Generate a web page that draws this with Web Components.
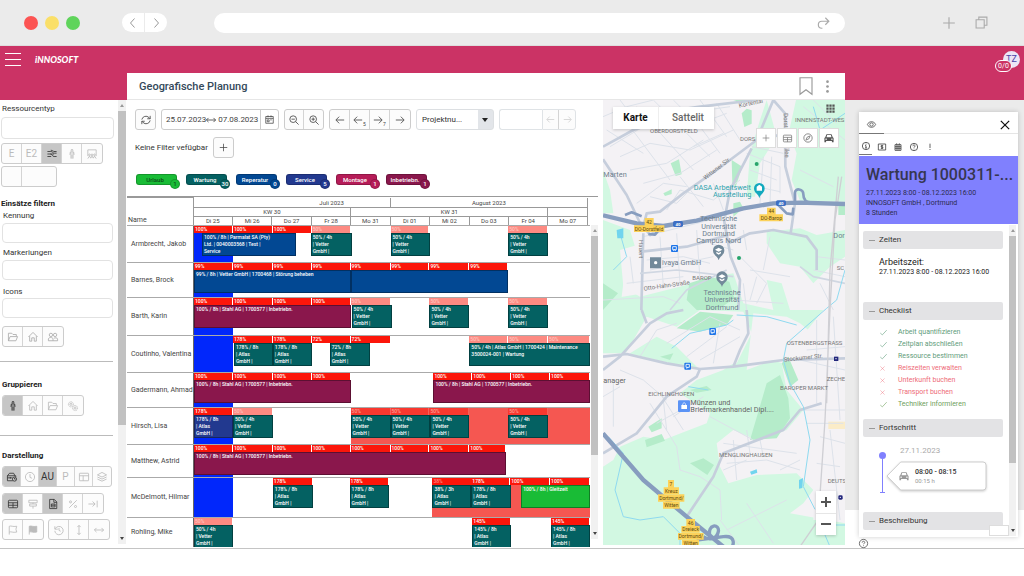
<!DOCTYPE html>
<html lang="de">
<head>
<meta charset="utf-8">
<title>Geografische Planung</title>
<style>
html{background:#fff}
body{margin:0;font:8px/10px Roboto,"Liberation Sans",sans-serif;color:#333}
</style>
</head>
<body>
<browser-bar></browser-bar>
<planner-app></planner-app>
<script>
const define = (name, html, setup) => {
  const tpl = document.createElement('template');
  tpl.innerHTML = '<style>*{box-sizing:border-box}button,input,select{font:inherit;color:inherit;margin:0}button.on{color:#333}h1,h2,h3,p,ul,dl,dd{margin:0;padding:0}</style>' + html;
  customElements.define(name, class extends HTMLElement {
    constructor() {
      super();
      this.attachShadow({mode: 'open'}).append(tpl.content.cloneNode(true));
    }
    connectedCallback() { if (setup) setup(this, this.shadowRoot); }
  });
};

/* ---------- icons, 24 x 24 grid ---------- */
const ICONS = {
  left: '<path d="M15 3l-8 9 8 9"/>',
  right: '<path d="M9 3l8 9-8 9"/>',
  share: '<path d="M21 9h-11a6 6 0 0 0 0 12h1M16 3l6 6-6 6"/>',
  plus: '<path d="M12 2v20M2 12h20"/>',
  minus: '<path d="M2 12h20"/>',
  tabs: '<path d="M2 7h15v15H2zM7 7V2h15v15h-5"/>',
  close: '<path d="M2 2l20 20M22 2L2 22"/>',
  refresh: '<path d="M2 11a10 10 0 0 1 17-5l3 3M22 2v7h-7M22 13a10 10 0 0 1-17 5l-3-3M2 22v-7h7"/>',
  range: '<path d="M1 12h22M6 7l-5 5 5 5M18 7l5 5-5 5"/>',
  calendar: '<path d="M2 4h20v18H2zM2 9h20M8 1v5M16 1v5" /><path d="M6 13h5v5H6z"/><path d="M14 13h4"/>',
  zoomout: '<circle cx="10" cy="10" r="8"/><path d="M16 16l7 7M6 10h8"/>',
  zoomin: '<circle cx="10" cy="10" r="8"/><path d="M16 16l7 7M6 10h8M10 6v8"/>',
  aleft: '<path d="M22 12H3M10 4l-8 8 8 8"/>',
  aright: '<path d="M2 12h19M14 4l8 8-8 8"/>',
  toend: '<path d="M1 12h16M11 6l6 6-6 6M22 4v16"/>',
  updown: '<path d="M12 1v22M8 5l4-4 4 4M8 19l4 4 4-4"/>',
  person: '<circle cx="12" cy="3" r="2.200"/><path d="M7 14l1-7h8l1 7M9.500 8v15M14.500 8v15M12 14v9"/>',
  group: '<path d="M2 17V2h20v15"/><circle cx="6" cy="14" r="2"/><circle cx="12" cy="14" r="2"/><circle cx="18" cy="14" r="2"/><path d="M2 23l4-6 3 5 3-5 3 5 3-5 4 6"/>',
  swap: '<path d="M1 6h8c5 0 4 4 9 4h5M23 6h-6M1 12h7c5 0 4 6 9 6h6M1 18h9M9 3c5 0 5 3 9 3M8 12h9"/>',
  folder: '<path d="M1 21V3h8l3 3h8v4M1 21L5 11h18l-4 10z"/>',
  home: '<path d="M1 12L12 1l11 11M4 10v12h5v-8h6v8h5V10"/>',
  people: '<circle cx="7" cy="7" r="4"/><circle cx="17" cy="7" r="4"/><path d="M1 21v-4c0-5 11-5 11 0v4zM12 21h11v-4c0-3-6-4-9-2"/>',
  gears: '<circle cx="7" cy="8" r="6" stroke-dasharray="3 1"/><circle cx="7" cy="8" r="2.500"/><circle cx="17" cy="17" r="6" stroke-dasharray="3 1"/><circle cx="17" cy="17" r="2.500"/>',
  clock: '<circle cx="12" cy="12" r="11"/><path d="M12 5v8l5 2"/>',
  history: '<path d="M2 3v7h7M3 9a10 10 0 1 1-1 5M12 7v6l4 2"/>',
  caseclock: '<path d="M14 21H1V9h20v3M1 9l5-6h10l3 6M1 14h12M8 12v4" /><circle cx="18" cy="17" r="5"/><path d="M18 14v3h3"/>',
  table: '<rect x="1" y="3" width="22" height="18" rx="2"/><path d="M1 9h22M1 15h22M12 9v12"/>',
  layout: '<rect x="1" y="3" width="22" height="18" rx="1"/><path d="M1 9h22M10 9v12"/>',
  layers: '<path d="M12 1l11 6-11 5L1 7zM1 12l11 5 11-5M1 17l11 5 11-5"/>',
  sign: '<path d="M2 3h20v6H2zM4 12h16v5H4zM12 9v3M12 17v6"/>',
  doc: '<path d="M4 1h11l6 6v16H4zM14 1v7h7M8 12h9v7H8zM8 15h9"/>',
  percent: '<path d="M21 3L3 21"/><circle cx="6" cy="7" r="2.500"/><circle cx="18" cy="18" r="2.500"/>',
  flag: '<path d="M3 23V3c5-2 8 2 18 0l-2 7 2 7c-10 2-13-2-18 0"/>',
  flagfull: '<path fill="currentColor" d="M3 23V3c5-2 8 2 18 0v14c-10 2-13-2-18 0"/>',
  bookmark: '<path d="M4 1h16v22l-8-6-8 6z"/>',
  dots: '<g fill="currentColor" stroke="none"><circle cx="12" cy="3" r="2.500"/><circle cx="12" cy="12" r="2.500"/><circle cx="12" cy="21" r="2.500"/></g>',
  grid: '<path fill="currentColor" stroke="none" d="M1 1h6v6H1zM9 1h6v6H9zM17 1h6v6h-6zM1 9h6v6H1zM9 9h6v6H9zM17 9h6v6h-6zM1 17h6v6H1zM9 17h6v6H9zM17 17h6v6h-6z"/>',
  compass: '<circle cx="12" cy="12" r="10"/><path d="M17 7l-3 7-7 3 3-7z"/>',
  car: '<path fill="currentColor" stroke="none" fill-rule="evenodd" d="M6 3h12l3 7 2 2v10h-4v-3H5v3H1V12l2-2zM7.500 5L6 10h12l-1.500-5zM5 13a1.700 1.700 0 1 0 .1 0M19 13a1.700 1.700 0 1 0 .1 0"/>',
  eye: '<path d="M1 12C5 2 19 2 23 12 19 22 5 22 1 12z"/><circle cx="12" cy="12" r="4.500"/>',
  info: '<circle cx="12" cy="12" r="11"/><path d="M12 5v3M9 11h3v7M9 18h6"/>',
  money: '<path d="M1 3h22v18H1z"/><path d="M15.500 8h-6v4h5v4H8.500M12 6v12"/>',
  cal2: '<path d="M3 5h18v17H3zM3 11h18M3 16h18M9 5v17M15 5v17M8 1v4M16 1v4"/>',
  help: '<circle cx="12" cy="12" r="11"/><path d="M8.500 9.500c0-5 7-4 7-.5 0 2.500-3.500 2.500-3.500 5M12 17v2"/>',
  bang: '<path d="M12 2v13M12 18v3"/>',
  check: '<path d="M1 14l7 6L23 4"/>',
  cross: '<path d="M2 2l20 20M22 2L2 22"/>'
};
define('ui-icon', `<style>:host{display:inline-block;width:var(--size,10px);height:var(--size,10px);flex:none}
svg{display:block;width:100%;height:100%;fill:none;stroke:currentColor;stroke-width:var(--stroke,2);overflow:visible}</style>
<svg viewBox="0 0 24 24" aria-hidden="true"></svg>`,
  (el, r) => { r.querySelector('svg').innerHTML = ICONS[el.getAttribute('name')] || ''; });

define('button-group', `<style>:host{display:inline-flex;height:21px;border:1px solid #ccc;border-radius:3px;background:#fcfcfc;overflow:hidden;color:#444;flex:none}
::slotted(button){appearance:none;border:0;border-right:1px solid #d4d4d4;background:none;padding:0;margin:0;width:var(--cell,20px);display:flex;align-items:center;justify-content:center;color:inherit;font:inherit}
::slotted(button:last-child){border-right:0}
::slotted(button.on){background:#c6c6c6}
::slotted(button.wide){width:34px}</style><slot></slot>`);

define('scroll-rail', `<style>:host{display:flex;flex-direction:column;align-items:center;background:#f1f1f1;width:7px}
i{border:2px solid transparent;height:0;margin:4px 0}.u{border-bottom:3px solid #999;border-top:0}.d{border-top:3px solid #444;border-bottom:0}
b{background:#c1c1c1;width:100%;flex:var(--thumb,70) 0 0}s{flex:var(--rest,30) 0 0}</style><i class="u"></i><b></b><s></s><i class="d"></i>`);

/* ---------- browser frame ---------- */
define('browser-bar', `<style>
:host{display:flex;align-items:center;height:46px;box-sizing:border-box;background:#ebebeb;border-bottom:1px solid #dedede;padding:0 36px 0 24px;color:#aaa}
.dots{display:flex;gap:7px}.dots i{width:14px;height:14px;border-radius:50%}
nav{display:flex;gap:1px;margin:0 47px 0 42px}
nav button{border:0;background:#fff;width:22px;height:19px;padding:0;display:flex;align-items:center;justify-content:center;color:#999}
nav button:first-child{border-radius:10px 0 0 10px}nav button:last-child{border-radius:0 10px 10px 0}
.url{flex:1;display:flex;align-items:center;background:#fff;height:20px;border-radius:10px;padding:0 15px}
.url input{flex:1;min-width:0;border:0;background:none;outline:0}
.plain{border:0;background:none;padding:0;display:flex;color:#aaa}
.end{display:flex;align-items:center;gap:19px;margin-left:97px}
</style>
<div class="dots"><i style="background:#fc5453"></i><i style="background:#fadf68"></i><i style="background:#5fd45b"></i></div>
<nav aria-label="Verlauf"><button aria-label="Zurück"><ui-icon name="left" style="--size:12px"></ui-icon></button><button aria-label="Vor"><ui-icon name="right" style="--size:12px"></ui-icon></button></nav>
<div class="url"><input aria-label="Adresse"><button class="plain" aria-label="Teilen"><ui-icon name="share" style="--size:14px"></ui-icon></button></div>
<div class="end"><button class="plain" aria-label="Neuer Tab"><ui-icon name="plus" style="--size:14px"></ui-icon></button><button class="plain" aria-label="Tabs"><ui-icon name="tabs" style="--size:13px"></ui-icon></button></div>`);

/* ---------- application shell ---------- */
define('planner-app', `<style>
:host{display:block;background:linear-gradient(#cb3365 54px,#ebebeb 54px);border-bottom:1px solid #c4c4c4}
header{display:flex;align-items:center;height:27px;padding:0 4px 0 5px;color:#fff}
.menu{border:0;background:none;padding:0;width:16px;height:13px;display:flex;flex-direction:column;justify-content:space-between}
.menu i{height:1px;width:16px;background:#fff}
.logo{font:italic 900 9px/12px Lato,sans-serif;margin-left:14px;flex:1;color:#fff;text-decoration:none}
.user{position:relative;width:17px;height:17px;border-radius:50%;background:#ece6f6;color:#4a43a8;font-size:9px;line-height:17px;text-align:center;border:0;padding:0}
.user span{position:absolute;left:-8px;top:9px;width:17px;height:12px;border:1px solid #fff;border-radius:7px;background:#cb3365;color:#fff;font-size:7px;line-height:10px}
main{display:grid;grid-template-columns:127px minmax(0,1fr) 179px}
side-panel,detail-column{margin-top:27px}
</style>
<header><button class="menu" aria-label="Menü"><i></i><i></i><i></i></button><a class="logo" href="#">iNNOSOFT</a><button class="user" aria-label="Benutzer TZ">TZ<span>0/0</span></button></header>
<main><side-panel></side-panel><planning-board></planning-board><detail-column></detail-column></main>`);

/* ---------- left panel ---------- */
const ic = (n, label, on) => `<button aria-label="${label}"${on ? ' class="on"' : ''}><ui-icon name="${n}"></ui-icon></button>`;
define('side-panel', `<style>
:host{display:flex;background:#fff;padding-bottom:4px}
.body{flex:1;min-width:0;padding-top:4px;color:#333}
scroll-rail{width:8px;--thumb:313;--rest:107;margin-right:1px}
section{padding:0 5px 0 2px}
section+section{border-top:1px solid #bbb;margin-right:5px;padding-right:0}
label{display:block;padding-left:1px}label.f{margin-top:8px}
input{display:block;width:100%;height:20px;border:1px solid #e2e2e2;border-radius:4px;background:#fff;margin-top:2px}
h2{font-size:8px;line-height:10px;font-weight:700;color:#222}
button-group{color:#aaa;vertical-align:top}
.pale button-group{color:#bbb}
.row{display:flex;gap:4px;margin-top:6px}
</style>
<div class="body">
<section class="pale" style="padding-left:1px;padding-right:4px"><label for="rt">Ressourcentyp</label><input id="rt" style="height:22px;margin-top:3px">
<div class="row" style="margin-top:4px;font-size:10px"><button-group><button>E</button><button>E2</button>${ic('swap','Wechsel',1)}${ic('person','Person')}${ic('group','Gruppe')}</button-group></div>
<div class="row" style="margin-top:2px"><button-group><button aria-label="leer"></button><button aria-label="leer" class="wide"></button></button-group></div>
<h2 style="margin-top:12px">Einsätze filtern</h2>
</section>
<section style="border:0;margin-right:0;padding-right:5px;padding-bottom:14px">
<label for="k" style="margin-top:2px">Kennung</label><input id="k">
<label class="f" style="margin-top:5px" for="m">Markeriungen</label><input id="m">
<label class="f" style="margin-top:7px" for="i">Icons</label><input id="i" style="margin-top:1px">
<div class="row" style="margin-top:8px"><button-group>${ic('folder','Ordner')}${ic('home','Start')}${ic('people','Personen')}</button-group></div>
</section>
<section class="pale" style="padding-top:18px;padding-bottom:19px"><h2>Gruppieren</h2>
<div class="row" style="margin-top:5px"><button-group>${ic('person','Person',1)}${ic('home','Start')}${ic('folder','Ordner')}${ic('gears','Technik')}</button-group></div></section>
<section class="pale" style="padding-top:15px"><h2>Darstellung</h2>
<div class="row" style="margin-top:5px;font-size:10px;--cell:18px"><button-group>${ic('caseclock','Einsatzzeit',1)}${ic('clock','Uhr')}<button class="on">AU</button><button>P</button>${ic('layout','Layout')}${ic('layers','Ebenen')}</button-group></div>
<div class="row"><button-group>${ic('table','Tabelle',1)}${ic('sign','Schild')}${ic('doc','Dokument',1)}${ic('percent','Prozent')}${ic('toend','Ende')}</button-group></div>
<div class="row" style="margin-top:5px"><button-group>${ic('flag','Flagge')}${ic('flagfull','Flagge voll')}</button-group><button-group>${ic('history','Verlauf')}${ic('updown','Höhe')}${ic('range','Breite')}</button-group></div></section>
</div><scroll-rail></scroll-rail>`);

/* ---------- centre ---------- */
define('legend-chip', `<style>
:host{display:block;position:relative;width:41px;height:11px;border-radius:3px;background:var(--c);border:1px solid #0003;box-sizing:border-box;color:var(--t,#fff);font-size:6px;line-height:9px;font-weight:500;text-align:center;padding-right:3px}
b{position:absolute;right:-4px;top:4px;width:10px;height:10px;border-radius:50%;background:var(--c);border:1px solid #0003;font-weight:500;line-height:8px}
</style><slot></slot><b></b>`, (el, r) => { r.querySelector('b').textContent = el.getAttribute('count'); });

define('planning-board', `<style>
:host{display:block;background:#fff;min-width:0}
.head{display:flex;align-items:center;height:27px;padding:0 11px 0 12px;border-bottom:1px solid #e6e6e6;color:#999}
h1{font-size:11px;line-height:14px;font-weight:500;color:#34495a;flex:1;padding-top:2px}
.plain{border:0;background:none;padding:0;display:flex;color:inherit}
.cols{display:grid;grid-template-columns:minmax(0,1fr) 242px}
.left{padding-right:5px;min-width:0}
.tools{display:flex;padding:9px 0 0 8px;gap:5px;color:#444}
.date{display:flex;height:21px;border:1px solid #ccc;border-radius:3px;align-items:center;padding-left:4px}
.date span{display:flex;align-items:center;width:94px}.date button{border:0;border-left:1px solid #ccc;background:none;width:18px;height:19px;padding:0;display:flex;align-items:center;justify-content:center}
.sel{display:flex;position:relative;width:78px;height:21px}
select{appearance:none;width:100%;border:1px solid #dcdfe2;border-radius:3px;padding:0 0 0 5px;background:linear-gradient(90deg,transparent 61px,#e2e5e9 61px);color:#333}
.sel i{position:absolute;right:6px;top:9px;border:3px solid transparent;border-top:4px solid #222;border-bottom:0}
.find{display:flex}.find input{width:43px;border:1px solid #dfe3e6;border-right:0;border-radius:3px 0 0 3px;background:#fff}
.find button-group{color:#ccc;border-color:#dfe3e6;border-radius:0 3px 3px 0;--cell:16px;--size:9px}
.slim{--cell:19px}
sub{font-size:5px;line-height:5px;align-self:flex-end;margin-bottom:2px}
.filter{display:flex;align-items:center;gap:5px;padding:7px 8px 0}
.legend{display:flex;gap:9px;padding:16px 9px 11px}
</style>
<div class="head"><h1>Geografische Planung</h1>
<button class="plain" aria-label="Merken" style="margin-right:6px"><ui-icon name="bookmark" style="--size:18px;--stroke:1.500"></ui-icon></button><button class="plain" aria-label="Mehr"><ui-icon name="dots" style="--size:13px"></ui-icon></button></div>
<div class="cols"><div class="left">
<div class="tools">
<button-group class="slim">${ic('refresh','Aktualisieren')}</button-group>
<div class="date"><span>25.07.2023<ui-icon name="range"></ui-icon>&nbsp;07.08.2023</span><button aria-label="Kalender"><ui-icon name="calendar" style="--size:9px"></ui-icon></button></div>
<button-group class="slim">${ic('zoomout','Verkleinern')}${ic('zoomin','Vergrößern')}</button-group>
<button-group>${ic('aleft','Zurück')}<button aria-label="5 zurück"><ui-icon name="aleft"></ui-icon><sub>5</sub></button><button aria-label="7 vor"><ui-icon name="aright"></ui-icon><sub>7</sub></button>${ic('aright','Vor')}</button-group>
<div class="sel"><select aria-label="Projekt"><option>Projektnu...</option></select><i></i></div>
<div class="find"><input aria-label="Suche"><button-group>${ic('aleft','Voriger')}${ic('aright','Nächster')}</button-group></div>
</div>
<div class="filter"><span>Keine Filter vefügbar</span><button-group class="slim" style="--size:9px">${ic('plus','Filter')}</button-group></div>
<div class="legend"><legend-chip count="1" style="--c:#19bc36;--t:#0a4d16">Urlaub</legend-chip><legend-chip count="30" style="--c:#046162">Wartung</legend-chip><legend-chip count="0" style="--c:#024893">Reperatur</legend-chip><legend-chip count="5" style="--c:#22398f">Service</legend-chip><legend-chip count="1" style="--c:#b61c58">Montage</legend-chip><legend-chip count="1" style="--c:#8a174c">Inbetriebn.</legend-chip></div>
<gantt-chart></gantt-chart>
</div><map-view></map-view></div>`);

/* The time axis is split in 397 slots; a day takes about 39 of them. */
const DAY = [0, 39, 79, 118, 157, 197, 236, 276, 315, 355, 397];
const V = '50% / 4h\n| Vetter\nGmbH |', A = '178% / 8h\n| Atlas\nGmbH |', A145 = '145% / 8h\n| Atlas\nGmbH |';
const S = '100% / 8h | Stahl AG | 1700577 | Inbetriebn.';
const days = (from, to, t) => Array.from({length: to - from + 1}, (_, i) => [DAY[from + i], DAY[from + i + 1], t]);
const ROWS = [
  {n: 'Armbrecht, Jakob', h: 37, load: [...days(0,2,'100%'), ...days(3,3,'50%'), ...days(5,5,'50%'), ...days(8,8,'50%')],
   jobs: [[8,102,'100% / 8h | Parmalat SA (Pty)\nLtd. | 0040003568 | Test |\nService','b'],[117,158,V,'t'],[197,237,V,'t'],[315,355,V,'t']]},
  {n: 'Barnes, Brock', h: 35, load: days(0,7,'99%'), jobs: [[0,157,'99% / 8h | Vetter GmbH | 1700468 | Störung beheben','b'],[157,315,'','b']]},
  {n: 'Barth, Karin', h: 38, load: [...days(0,3,'100%'), ...days(4,4,'50%'), ...days(6,6,'50%'), ...days(8,8,'50%')],
   jobs: [[0,157,S,'m'],[158,198,V,'t'],[236,276,V,'t'],[315,355,V,'t']]},
  {n: 'Coutinho, Valentina', h: 37, load: [...days(1,2,'178%'), ...days(3,4,'72%'), ...days(7,9,'50%')],
   jobs: [[40,79,A,'t'],[79,118,A,'t'],[136,176,'72% / 8h\n| Atlas\nGmbH |','t'],[276,397,'50% / 4h | Atlas GmbH | 1700424 | Maintenance\n3500024-001 | Wartung','t']]},
  {n: 'Gadermann, Ahmad', h: 35, load: [...days(0,3,'100%'), [240,279,'100%'],[279,318,'100%'],[318,357,'100%'],[357,397,'100%']],
   jobs: [[0,157,S,'m'],[240,397,S,'m']]},
  {n: 'Hirsch, Lisa', h: 37, red: 157, load: [...days(0,0,'178%'), ...days(1,1,'50%'), ...days(4,6,'50%').map(d => [...d,'dim']), [...days(8,8,'50%')[0],'dim']],
   jobs: [[0,39,A,'s'],[39,79,V,'t'],[157,197,V,'t'],[197,237,V,'t'],[237,276,V,'t'],[315,355,V,'t']]},
  {n: 'Matthew, Astrid', h: 33, load: days(0,7,'100%').map((d,i) => i === 7 ? [276,313,'100%'] : d), jobs: [[0,313,S,'m']]},
  {n: 'McDelmott, Hilmar', h: 40, red: 239, load: [[79,119,'178%'],[156,195,'178%'],[239,278,'38%','dark'],[278,317,'178%'],[317,357,'100%'],[357,397,'100%']],
   jobs: [[79,119,A,'t'],[156,195,A,'t'],[239,278,'38% / 3h\n| Atlas\nGmbH |','t'],[278,318,A,'t'],[328,397,'100% / 8h | Gleitzeit','g']]},
  {n: 'Rohling, Mike', h: 30, load: [[0,39,'50%'],[279,318,'145%'],[358,397,'145%']], jobs: [[0,39,V,'t'],[279,318,A145,'t'],[358,397,A145,'t']]}
];
define('gantt-row', `<style>
:host{display:grid;grid-template-columns:66px minmax(0,1fr);box-sizing:border-box;border-top:1px solid #aaa;overflow:hidden}
.name{padding-left:4px;align-self:center;font-size:7px;line-height:8px;white-space:nowrap}
.track{display:grid;grid-template-columns:repeat(397,minmax(0,1fr));grid-template-rows:7px 23px minmax(0,1fr);border-left:1px solid #666;color:#fff;font-size:5px;font-weight:500;overflow:hidden}
.load{grid-row:1;background:#fc160a;border-right:1px solid #fff;line-height:7px;padding-left:1px;overflow:hidden}
.low{background:#fd8a82;color:#fdc4bf}.dim{background:#f9382f;color:#fb9e97;border-right-color:#f9625a}.dark{color:#fb8a84;border-right-color:#fc160a}
.job{grid-row:2;border:1px solid #0005;line-height:7px;padding:0 0 0 1px;white-space:pre;overflow:hidden}
.blue{grid-row:1/4;background:#0127fb}.red{grid-row:1/4;background:#f55751}
.t{background:#046162}.b{background:#024893}.m{background:#8a174c}.s{background:#22398f}.g{background:#19bc36}
</style><div class="name"></div><div class="track"></div>`, (el, r) => {
  const d = ROWS[+el.getAttribute('index')];
  el.style.height = d.h + 'px';
  r.querySelector('.name').textContent = d.n;
  const track = r.querySelector('.track');
  track.replaceChildren();
  const add = (from, to, cls, text) => {
    const c = document.createElement('div');
    c.className = cls; c.textContent = text || '';
    c.style.gridColumn = (from + 1) + '/' + (to + 1);
    track.append(c);
  };
  add(0, 39, 'blue');
  if (d.red) add(d.red, 397, 'red');
  d.load.forEach(l => add(l[0], l[1], 'load ' + (l[3] || (l[2] === '50%' ? 'low' : '')), l[2]));
  d.jobs.forEach(j => add(j[0], j[1], 'job ' + j[3], j[2]));
});
define('gantt-chart', `<style>
:host{display:block;font-size:6px;color:#444}
table{border-collapse:collapse;table-layout:fixed;width:calc(100% - 10px);line-height:8px}
th{font-weight:400;border:1px solid #999;height:8px;padding:0;text-align:center;overflow:hidden;white-space:nowrap}
tr:first-child th{line-height:9px}
th.n{text-align:left;vertical-align:bottom;border-left:0;border-bottom:0;font-size:7px;padding:0 0 0 1px}
tr:last-child th{border-bottom:0}
.top{border-top:1px solid #999}
.body{display:flex}.rows{flex:1;min-width:0}scroll-rail{margin:0 0 8px 1px;--thumb:226;--rest:74}
</style>
<div class="top"><table><colgroup><col style="width:66px"></colgroup><thead>
<tr><th class="n" rowspan="3">Name</th><th colspan="5" style="padding-left:80px;border-top:0">Juli 2023</th><th colspan="5" style="border-top:0">August 2023</th></tr>
<tr><th colspan="4">KW 30</th><th colspan="5">KW 31</th><th></th></tr>
<tr><th>Di 25</th><th>Mi 26</th><th>Do 27</th><th>Fr 28</th><th>Mo 31</th><th>Di 01</th><th>Mi 02</th><th>Do 03</th><th>Fr 04</th><th>Mo 07</th></tr>
</thead></table></div>
<div class="body"><div class="rows">${ROWS.map((_, i) => `<gantt-row index="${i}"></gantt-row>`).join('')}</div><scroll-rail></scroll-rail></div>`);

/* ---------- map ---------- */
define('map-view', `<style>
:host{display:block;position:relative;overflow:hidden;background:#f4f2f5;margin-bottom:2px}
svg.map{position:absolute;inset:0;width:100%;height:100%;font-family:Roboto,sans-serif}
.ui{position:relative;display:flex;flex-direction:column;height:100%;color:#777}
.a{display:flex;justify-content:space-between;padding:7px 10px 0}
.tabs{display:flex;box-shadow:0 1px 3px #0003;height:22px}
.tabs button{border:0;background:#fff;font-size:10px;font-weight:500;color:#666;padding:0 0 0 3px;width:55px}.tabs button:first-child{color:#111;font-weight:700;width:46px;padding:0;border-right:1px solid #eee}
.apps{border:0;background:none;padding:0;height:10px;color:#555;margin-top:-3px}
.b{display:flex;justify-content:flex-end;gap:1px;padding:0 6px 0;margin-top:-1px}
.b button,.z button{border:1px solid #ddd;background:#fff;width:20px;height:20px;padding:0;display:flex;align-items:center;justify-content:center;color:inherit}
.z{margin:auto 9px 10px auto;background:#fff;box-shadow:0 1px 3px #0003}
.z button{border:0;width:20px;height:22px;color:#555}.z button+button{border-top:1px solid #e6e6e6;height:22px}
.g{fill:#d2f8e2}.g2{fill:#b5ecca}.u{fill:#f4f2f5}
.r3{stroke:#dde2ea;stroke-width:3}.r2{stroke:#d0d7e2;stroke-width:5}.r1{stroke:#c6cedc;stroke-width:8}.h{stroke:#879dbf;stroke-width:13}.w{stroke:#8fdaf0;stroke-width:3}
.lab{font-size:22px;fill:#6e7f8e}.cap{font-size:18px;fill:#777}.tag{font-size:15px;fill:#5c4a10;text-anchor:middle}
</style>
<svg class="map" viewBox="9 90 726 1340" preserveAspectRatio="xMinYMin slice" role="img" aria-label="Karte Dortmund">
<path class="g" d="M588 90H735V395L600 392 575 330 590 250 566 190zM500 90L530 200 480 280 465 380H440L450 250 480 150zM9 300L30 360 40 430 9 430zM9 450L90 480 105 530 110 590 70 640 60 720 9 740zM500 485L600 475 650 495 735 480V560L690 590 640 640 600 590 540 580 500 520zM9 690L190 660 280 640 340 620 400 610 430 700 520 720 500 630 545 640 570 720H735V760L650 800 600 760 560 740 460 730 440 900 520 870 545 880 560 960 610 1020 560 1080 470 1110 400 1080 350 1120 360 1190 385 1240 470 1215 590 1210 640 1260 610 1300 570 1330 735 1360V1430H9V1190L40 1170 60 1130 130 1100 190 1110 320 1060 330 1030 240 970 290 930 370 900 400 880 300 900 130 860 80 850 9 850z"/>
<path class="u" d="M140 740L230 770 300 720 430 725 455 790 410 880 300 900 230 830 170 800 90 850 100 910 130 940 90 970 9 1060V890L80 845z M60 540L130 520 330 540 385 580 390 610 280 640 120 680 70 650zM590 820L670 720 735 720V1350L640 1350 640 1200 605 1100 630 1010 570 930 560 860z"/>
<path class="g2" d="M425 130l15-14 15 5v40l-22 10zM212 280l25-12 8 45-18 5zM395 270l32 20-20 60-10-10zM190 370l25-12v14l-20 6zM400 400l20-5 10 20-30 25zM268 640l60-20 60 15 15 50-50 35H290l-30-30zM500 940l40-25 25 70 5 60-40 60-80 5zM545 880l20-20 30 70-25 20zM135 1110l50-18 10 20-55 20zM270 1180l40-15 32 20-20 30zM145 1070l40-25v30l-30 12zM180 860l40-10-10 20zM270 960l50-12 15 12-45 8zM400 90h60l-30 10zM300 725l100 10-20 30-80 20-70-10zM715 400h20v35h-20zM9 640l45 30-45 50z"/>
<path fill="#fbecc8" d="M685 1055h50v22h-50z"/>
<g fill="none" stroke-linejoin="round">
<path class="r3" d="M60 130L210 330M110 110L280 300M160 90L330 260M30 230L130 170 250 180 380 130M60 260L150 220 270 240 400 180M90 300L200 280 310 210M130 340L240 310 350 240M110 400L190 340 260 350M220 90L300 170 360 250M300 90L380 200M350 100L420 210M150 380L230 400 290 340M20 180L130 250M9 140L80 110 160 90M200 420L240 360 340 390 420 330M240 320L310 410M340 340L370 420M440 250L540 290 540 370M450 300L530 330M455 230L550 250M470 350L540 365M490 260L480 400M515 260L510 400M60 90L90 130M250 130L390 110M280 230L370 190"/>
<path class="r3" d="M130 500L330 450M140 570L250 560 330 580M150 600L340 560M90 560L100 640M180 500L190 650M230 490L240 640M290 480L300 630M330 520L400 540M80 640L250 620M420 560L500 640 470 700M450 600L570 620M440 540L430 480M510 500L490 600M400 690L550 700M9 690L190 680 240 700M640 600L735 620M650 560L735 570M610 110L735 210M640 90L710 160M600 300L700 350M660 640L700 720M430 640L440 720M470 620L450 690"/>
<path class="r3" d="M120 860L170 780 230 760M200 820L330 740 420 780M260 860L380 770M300 870L420 800M340 880L360 760M60 900L130 930 200 990M40 940V1070M9 980L60 950M150 1000L230 1130 240 1200 300 1220 360 1260 365 1350M170 1060L260 1010 320 1020M200 1080L190 990M220 1040L310 980M330 1040L460 1110M180 970L250 1080M370 1120L590 1150M380 1180L500 1170 600 1200M400 1110L410 1230M440 1080L450 1150M480 1110L490 1160M370 1200L440 1170M600 1020H735M620 1060H730M600 950H660M600 870L735 900M620 840L735 830M650 750V1000M700 740L720 1050M660 1100L735 1120M650 1180L720 1190M690 1080L720 1350M540 1200L600 1170M360 1350L420 1430M440 1300L520 1420M380 1380L560 1290"/>
<path class="r1" d="M9 268L80 375 130 480M130 470L140 430 180 425 250 370 350 300 470 210 560 190M9 230L100 180 190 150 230 120 300 110 470 90M470 210L520 90 555 130 556 290 585 400 572 490M375 440L390 360 455 235M130 490L124 720M372 450L392 560 420 630 415 720M385 520L450 490 520 480 620 500 650 540V600M124 545L260 530 385 495M130 470L150 495 175 480"/>
<path class="r1" d="M9 900L60 860 150 760 200 730 250 720M140 760L125 720M9 860L80 852 200 880 300 897 400 890 550 870 735 865M440 720L445 790 420 840 400 890M300 897L290 920 200 980 110 1090 9 1150M260 1340L340 1220 370 1150 550 1080 600 1020 665 1000"/>
<path class="r2" d="M120 610L230 600 400 620M210 720L260 660 380 600M600 590L640 620 735 640"/>
<path class="w" d="M735 130L660 180 640 110M215 835L270 790 380 765 400 750M735 600L710 690 680 715 560 820 550 870 570 940 610 1010 630 1110 610 1250 645 1318M40 600L80 560 60 490M25 1100L70 1150 45 1260 70 1340 120 1350 190 1340 240 1390V1430M410 735L500 740 590 765M265 950L325 960M660 1360L690 1430M700 1365H735"/>
<path d="M725 320L705 450 690 720 675 1050 655 1350 600 1430M715 320L690 600 680 1000" stroke="#cfcfd4" stroke-width="4"/>
<path class="h" d="M75 435l20-8 30 12M145 492l20 2 15-18M535 405l25 25 18 3 2-20M585 398V368c0-15 25-12 25 5s10 25 25 25" style="stroke-width:8"/>
<path class="h" d="M9 436L110 460 190 468 290 452 430 415 520 400 600 398 735 402M9 1090L130 1230 260 1340 370 1430"/>
<path class="h" style="stroke-width:10" d="M290 1410L370 1400C410 1395 400 1430 395 1430M330 1400c-10-40 30-40 25-15s-30 25-45 15"/>
</g>
<path fill="#71d4ee" d="M450 1205l20-7 2 10-18 6zM597 1230l12-6-2 30-10 2zM50 480l20-5v30H52z"/>
<g class="cap"><text x="150" y="188">OBERDORSTFELD</text><text x="420" y="212">DORS</text><text x="585" y="155">INNENSTADT-WES</text><text x="277" y="631">BAROP</text><text x="145" y="979">EICHLINGHOFEN</text><text x="560" y="825">OSTENBERGSTRASS</text><text x="540" y="959">BAROPER MARKT</text><text x="680" y="932">ZECHE</text><text x="357" y="1160">MENGLINGHAUSEN</text><text x="683" y="1238">DEUTS</text><text x="710" y="599">SC</text>
<text transform="translate(418 113) rotate(-12)">Kortental</text><text transform="translate(316 330) rotate(-38)">Wittener Str.</text><text transform="translate(132 662) rotate(-8)">Otto-Hahn-Straße</text><text transform="translate(552 875) rotate(-6)">Stockumer Str.</text><text transform="translate(118 510) rotate(90)">Hauert</text><text transform="translate(551 130) rotate(88)">Dorstfelder Allee</text></g>
<g class="lab"><text x="10" y="320">Marten</text><text x="281" y="361" style="fill:#2ea3ad">DASA Arbeitswelt</text><text x="339" y="381" style="fill:#2ea3ad">Ausstellung</text><g text-anchor="middle"><text x="356" y="454">Technische</text><text x="356" y="476">Universität</text><text x="356" y="499">Dortmund</text><text x="356" y="519">Campus Nord</text><text x="366" y="675">Technische</text><text x="366" y="697">Universität</text><text x="366" y="720">Dortmund</text></g><text x="186" y="586">ivaya GmbH</text><text x="700" y="504">Dor</text><g style="fill:#666"><text x="10" y="938">anager</text><text x="271" y="1006">Münzen und</text><text x="271" y="1026">Briefmarkenhandel Dipl....</text></g></g>
<path fill="#12a9be" d="M478 385c-3-15-16-14-16-30a16 16 0 0 1 32 0c0 16-13 15-16 30z"/><path fill="#fff" d="M470 350l8-6 8 6v12h-16z"/>
<path fill="#72899a" d="M356 571c-3-14-17-14-17-30a17 17 0 0 1 34 0c0 16-14 16-17 30zM366 651c-3-14-17-14-17-30a17 17 0 0 1 34 0c0 16-14 16-17 30zM150 562h33v33h-33z"/>
<path fill="#fff" d="M345 539l11-6 11 6-11 6zM349 545l7 4 7-4v5l-7 4-7-4zM355 619l11-6 11 6-11 6zM359 625l7 4 7-4v5l-7 4-7-4z"/><circle cx="167" cy="578" r="5" fill="#fff"/>
<g fill="#1d74e8"><rect x="213" y="525" width="21" height="21" rx="3"/><rect x="328" y="774" width="20" height="21" rx="3"/><rect x="253" y="878" width="20" height="21" rx="3"/></g>
<g fill="none" stroke="#fff" stroke-width="2.500"><path d="M218 530h11v9h-11zM220 543l3-4M227 543l-3-4M333 779h10v9h-10zM335 792l3-4M258 883h10v9h-10zM260 896l3-4"/></g>
<rect x="234" y="991" width="36" height="35" rx="3" fill="#5b93f5"/><path fill="#fff" d="M244 1005h17v12h-17z"/><path d="M248 1005c0-9 9-9 9 0" fill="none" stroke="#fff" stroke-width="2"/>
<g fill="#23277c"><rect x="702" y="860" width="13" height="13"/><rect x="715" y="1276" width="13" height="13" rx="4"/></g><g fill="#fff"><circle cx="708" cy="866" r="2"/><circle cx="721" cy="1282" r="2"/></g>
<g fill="#28a56c"><circle cx="470" cy="282" r="6"/><circle cx="417" cy="564" r="6"/></g>
<g fill="#3d6fc4"><rect x="219" y="453" width="30" height="18" rx="5"/><rect x="528" y="391" width="30" height="17" rx="5"/></g><g style="font-size:13px;font-weight:700;text-anchor:middle;fill:#fff"><text x="234" y="467">40</text><text x="543" y="404">40</text></g>
<g fill="#fcd25a"><path d="M134 444h27v22h-27zM102 466h91v20h-91zM501 413h26v20h-26zM478 433h71v21h-71zM204 1230h18v22h-18zM191 1252h46v20h-46zM174 1273h79v22h-79zM189 1296h50v20h-50zM259 1347h26v21h-26zM244 1368h55v20h-55zM234 1389h77v20h-77zM246 1410h51v20h-51z"/></g>
<g class="tag"><text x="147" y="461">42</text><text x="147" y="482">DO-Dorstfeld</text><text x="514" y="429">44</text><text x="514" y="449">DO-Barop</text><text x="213" y="1247">7</text><text x="214" y="1268">Kreuz</text><text x="214" y="1289">Dortmund/</text><text x="214" y="1311">Witten</text><text x="272" y="1364">46</text><text x="272" y="1384">Dreieck</text><text x="272" y="1405">Dortmund/</text><text x="272" y="1425">Witten</text></g>
</svg>
<div class="ui">
<div class="a"><div class="tabs"><button>Karte</button><button>Sattelit</button></div><button class="apps" aria-label="Apps"><ui-icon name="grid" style="--size:9px"></ui-icon></button></div>
<div class="b"><button aria-label="Hinzufügen"><ui-icon name="plus" style="--size:8px"></ui-icon></button><button aria-label="Liste"><ui-icon name="table" style="--size:9px"></ui-icon></button><button aria-label="Kompass"><ui-icon name="compass"></ui-icon></button><button aria-label="Auto"><ui-icon name="car" style="color:#555"></ui-icon></button></div>
<div class="z"><button aria-label="Hinein"><ui-icon name="plus" style="--size:12px;--stroke:4"></ui-icon></button><button aria-label="Heraus"><ui-icon name="minus" style="--size:12px;--stroke:4"></ui-icon></button></div>
</div>`);

/* ---------- right panel ---------- */
define('section-head', `<style>:host{display:flex;align-items:center;gap:4px;height:18px;background:#e3e3e5;border-radius:2px;padding:0 6px;box-sizing:border-box;color:#333}
i{width:6px;height:1px;background:#999}h3{font-size:8px;line-height:10px;font-weight:400}</style><i></i><h3><slot></slot></h3>`);
const item = (ok, t, c) => `<li style="color:${c}"><ui-icon name="${ok ? 'check' : 'cross'}" style="--size:${ok ? 7 : 5}px"></ui-icon><span>${t}</span></li>`;
define('detail-column', `<style>
:host{display:block;padding:12px 6px 0 14px;background:linear-gradient(#ebebeb,#ebebeb) 0 0/100% calc(100% - 38px) no-repeat #fff}
.card{position:relative;background:#fff;box-shadow:0 0 5px #0003}
.tabs{display:flex;justify-content:space-between;align-items:center;height:22px;border-bottom:1px solid #e5e5e5;padding:0 8px 0 0}
button{border:0;background:none;padding:0;display:flex;align-items:center;justify-content:center;color:#444}
.tabs button{padding-top:5px}
.eye{width:25px;height:22px;border-bottom:1px solid #777}
.ic{display:flex;height:22px;padding-top:4px;gap:3px}
.ic button{width:13px;height:17px}.ic button:first-child{border-bottom:1px solid #777}
.hero{background:#8080fe;padding:9px 6px 6px 7px;height:68px;color:#2b2b4e;font-size:7px;line-height:10px}
h2{font-size:16px;line-height:19px;font-weight:500;color:#363650;margin-bottom:4px;white-space:nowrap}
.body{display:flex}.c{flex:1;min-width:0;padding:7px 6px 7px 4px}
scroll-rail{width:7px;margin:1px 2px 1px 0;--thumb:236;--rest:64}
.time{padding:8px 0 0 16px;height:53px;font-size:7px;line-height:9px;color:#222;white-space:nowrap}.time dt{font-size:9px;line-height:11px}
ul{list-style:none;padding:6px 0 0 17px;height:99px;font-size:7px;line-height:12px}
li{display:grid;grid-template-columns:18px 1fr;align-items:center;height:12px;white-space:nowrap}
.prog{height:75px;padding:9px 0 0 16px;display:grid;grid-template-columns:7px 1fr}
.line{display:flex;flex-direction:column;align-items:center;padding-top:6px}.line b{width:7px;height:7px;border-radius:50%;background:#8080fe}.line i{width:1px;height:33px;background:#8080fe}.line u{width:5px;height:1px;background:#8080fe}
.prog p{padding-left:14px;font-size:8px;color:#aaa;line-height:10px}
.bub{display:flex;align-items:center;gap:6px;height:28px;margin:6px 0 0;position:relative;color:#999;padding-left:13px;font-size:6px;line-height:8px;width:100px}
.bub svg{position:absolute;inset:0;width:100%;height:100%;fill:#fff;stroke:#ccc;overflow:visible;filter:drop-shadow(0 1px 1px #0003)}
.bub>*{position:relative}.bub strong{display:block;font-size:7px;line-height:10px;font-weight:500;color:#333}
.foot{height:11px;padding-top:2px;color:#444}
.inp{position:absolute;right:9px;bottom:1px;width:20px;height:11px;border:1px solid #ddd;background:#fff}
</style>
<div class="card"><div class="tabs"><button class="eye" aria-label="Ansicht"><ui-icon name="eye" style="--size:9px"></ui-icon></button><button aria-label="Schließen"><ui-icon name="close" style="--size:10px;--stroke:3;color:#111"></ui-icon></button></div>
<div class="ic">${['info','money','cal2','help','bang'].map(n => `<button aria-label="${n}"><ui-icon name="${n}" style="--size:8px;--stroke:2.500"></ui-icon></button>`).join('')}</div>
<div class="hero"><h2>Wartung 1000311-...</h2><div>27.11.2023 8:00 - 08.12.2023 16:00</div><div>INNOSOFT GmbH , Dortmund</div><div>8 Stunden</div></div>
<div class="body"><div class="c">
<section-head>Zeiten</section-head>
<dl class="time"><dt>Arbeitszeit:</dt><dd>27.11.2023 8:00 - 08.12.2023 16:00</dd></dl>
<section-head>Checklist</section-head>
<ul>${item(1,'Arbeit quantifizieren','#5f9c7b')}${item(1,'Zeitplan abschließen','#5f9c7b')}${item(1,'Ressource bestimmen','#5f9c7b')}${item(0,'Reiszeiten verwalten','#ee6c78')}${item(0,'Unterkunft buchen','#ee6c78')}${item(0,'Transport buchen','#ee6c78')}${item(1,'Techniker informieren','#6fa05c')}</ul>
<section-head>Fortschritt</section-head>
<div class="prog"><div class="line"><b></b><i></i><u></u></div><div><p>27.11.2023</p><div class="bub"><svg viewBox="0 0 102 28" preserveAspectRatio="none"><path d="M1 14L15 0H99q3 0 3 3V25q0 3-3 3H15z"/></svg><ui-icon name="car"></ui-icon><div><strong>08:00 - 08:15</strong>00:15 h</div></div></div></div>
<section-head>Beschreibung</section-head>
</div><scroll-rail></scroll-rail></div><input class="inp" aria-label="Notiz"></div>
<div class="foot"><button aria-label="Hilfe"><ui-icon name="help" style="--size:9px"></ui-icon></button></div>`);
</script>
</body>
</html>
